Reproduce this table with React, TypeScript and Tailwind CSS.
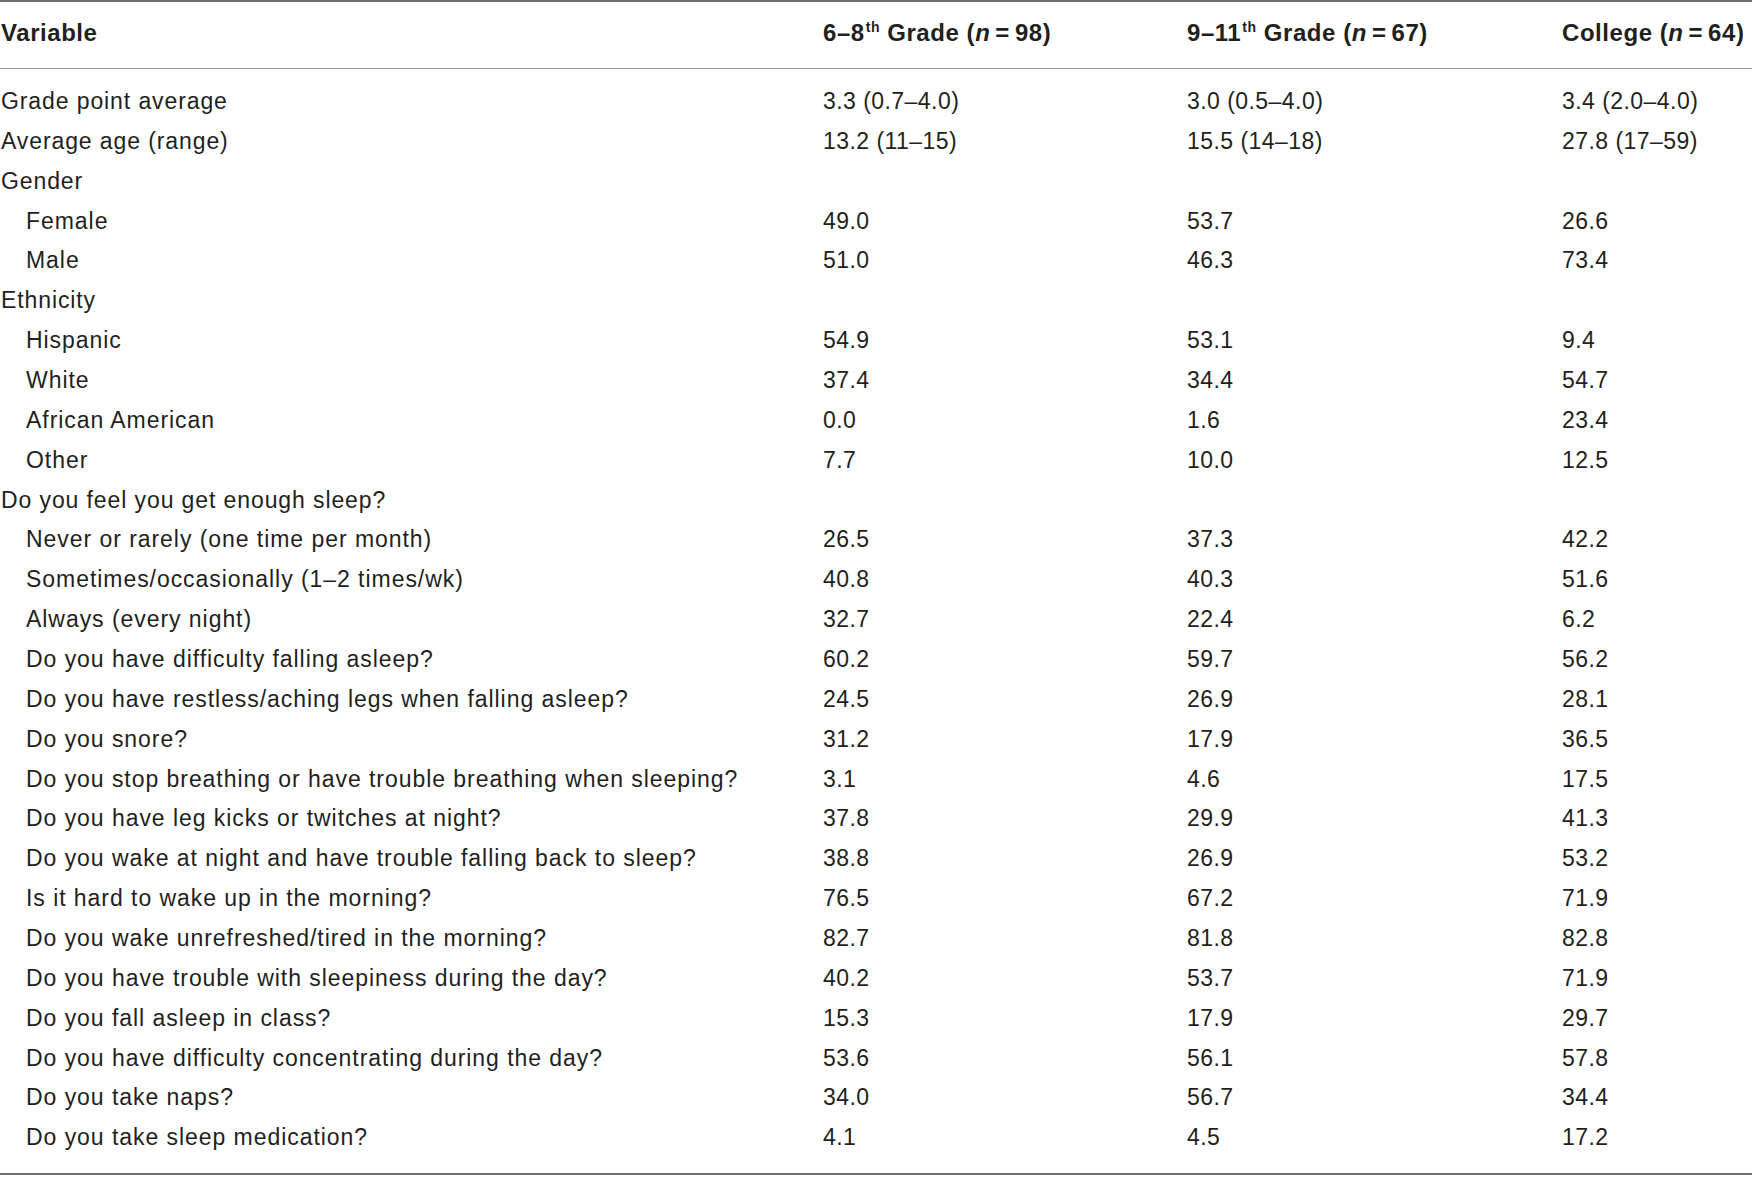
const rows: [string, boolean, string, string, string][] = [
  ['Grade point average', false, '3.3 (0.7–4.0)', '3.0 (0.5–4.0)', '3.4 (2.0–4.0)'],
  ['Average age (range)', false, '13.2 (11–15)', '15.5 (14–18)', '27.8 (17–59)'],
  ['Gender', false, '', '', ''],
  ['Female', true, '49.0', '53.7', '26.6'],
  ['Male', true, '51.0', '46.3', '73.4'],
  ['Ethnicity', false, '', '', ''],
  ['Hispanic', true, '54.9', '53.1', '9.4'],
  ['White', true, '37.4', '34.4', '54.7'],
  ['African American', true, '0.0', '1.6', '23.4'],
  ['Other', true, '7.7', '10.0', '12.5'],
  ['Do you feel you get enough sleep?', false, '', '', ''],
  ['Never or rarely (one time per month)', true, '26.5', '37.3', '42.2'],
  ['Sometimes/occasionally (1–2 times/wk)', true, '40.8', '40.3', '51.6'],
  ['Always (every night)', true, '32.7', '22.4', '6.2'],
  ['Do you have difficulty falling asleep?', true, '60.2', '59.7', '56.2'],
  ['Do you have restless/aching legs when falling asleep?', true, '24.5', '26.9', '28.1'],
  ['Do you snore?', true, '31.2', '17.9', '36.5'],
  ['Do you stop breathing or have trouble breathing when sleeping?', true, '3.1', '4.6', '17.5'],
  ['Do you have leg kicks or twitches at night?', true, '37.8', '29.9', '41.3'],
  ['Do you wake at night and have trouble falling back to sleep?', true, '38.8', '26.9', '53.2'],
  ['Is it hard to wake up in the morning?', true, '76.5', '67.2', '71.9'],
  ['Do you wake unrefreshed/tired in the morning?', true, '82.7', '81.8', '82.8'],
  ['Do you have trouble with sleepiness during the day?', true, '40.2', '53.7', '71.9'],
  ['Do you fall asleep in class?', true, '15.3', '17.9', '29.7'],
  ['Do you have difficulty concentrating during the day?', true, '53.6', '56.1', '57.8'],
  ['Do you take naps?', true, '34.0', '56.7', '34.4'],
  ['Do you take sleep medication?', true, '4.1', '4.5', '17.2'],
];

function N({ value }: { value: string }) {
  return (
    <>
      (<i>n</i>
      <span className="mx-[5px]">=</span>
      {value})
    </>
  );
}

export default function App() {
  return (
    <div className="w-[1752px] h-[1177px] bg-white text-[#231f20] font-['Liberation_Sans',Arial,sans-serif] overflow-hidden">
      <div className="border-t-2 border-b-2 border-[#6e6e6e]">
        {/* Header */}
        <div className="h-[67px] pt-[17px] pl-[1px] border-b border-[#9a9a9a] grid grid-cols-[822px_364px_375px_1fr] text-[24px] leading-[27px] font-bold tracking-[0.55px]">
          <div>Variable</div>
          <div>
            6–8<sup className="text-[14px] font-bold relative -top-[9px] ml-[1px]">th</sup> Grade <N value="98" />
          </div>
          <div>
            9–11<sup className="text-[14px] font-bold relative -top-[9px] ml-[1px]">th</sup> Grade <N value="67" />
          </div>
          <div>
            College <N value="64" />
          </div>
        </div>

        {/* Body */}
        <div className="pt-[13px] pb-[15px] pl-[1px] text-[23px] tracking-[0.45px]">
          {rows.map(([label, indent, a, b, c], i) => (
            <div key={i} className="grid grid-cols-[822px_364px_375px_1fr] h-[39.87px] leading-[39.87px] whitespace-nowrap">
              <div className={indent ? 'pl-[25px] tracking-[0.95px]' : 'tracking-[0.9px]'}>{label}</div>
              <div>{a}</div>
              <div>{b}</div>
              <div>{c}</div>
            </div>
          ))}
        </div>
      </div>
    </div>
  );
}
